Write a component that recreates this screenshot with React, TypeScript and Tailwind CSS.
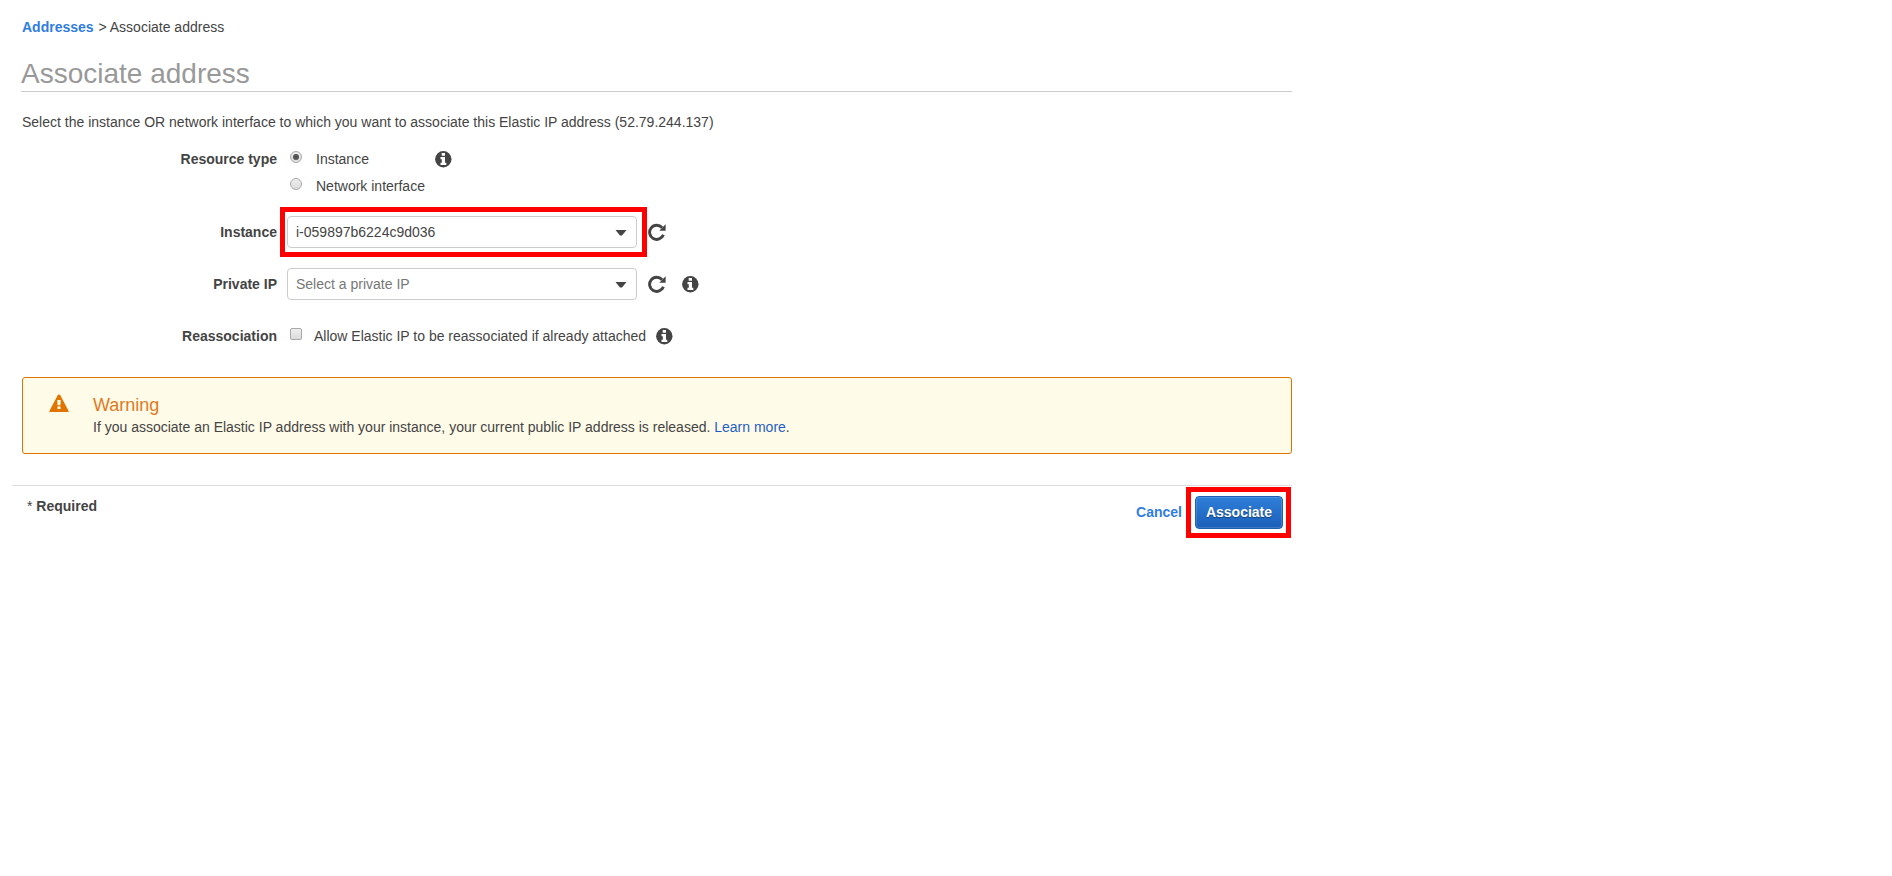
import React from "react";

function InfoIcon({ className = "" }: { className?: string }) {
  return (
    <svg viewBox="0 0 17 17" className={`size-[17px] shrink-0 ${className}`} aria-hidden="true">
      <circle cx="8.3" cy="8.2" r="8.2" fill="#444" />
      <path d="M6.700 2h3.300v2.700H6.700zM5.500 6H10v5.700h1.300v2.200H5.500v-2.200h1.300V8.200H5.500z" fill="#fff" />
    </svg>
  );
}

function RefreshIcon({ className = "" }: { className?: string }) {
  return (
    <svg viewBox="0 0 18 18" className={`size-[18px] shrink-0 ${className}`} aria-hidden="true">
      <path d="M14.1 4.700A7.100 7.100 0 1 0 15.400 11.700" fill="none" stroke="#444" strokeWidth="2.900" />
      <path d="M17.600 1.300v6.500H11.300z" fill="#444" />
    </svg>
  );
}

function WarningIcon() {
  return (
    <svg viewBox="0 0 20 18" className="mt-4 h-[18px] w-5 shrink-0" aria-hidden="true">
      <path d="M10 .4c.5 0 .9.2 1.200.7l8.400 15.800c.4.700-.1 1.100-.8 1.100H1.200c-.7 0-1.200-.4-.8-1.100L8.800 1.100c.3-.5.700-.7 1.200-.7z" fill="#df7400" />
      <path d="M8.300 6h3.400l-.3 5.200H8.600zM8.500 12.400h3v2.700h-3z" fill="#fffbe9" />
    </svg>
  );
}

function Row({ label, className, children }: { label: string; className: string; children: React.ReactNode }) {
  return (
    <div className={`flex ${className}`}>
      <div className="w-[277px] shrink-0 text-right font-bold">{label}</div>
      {children}
    </div>
  );
}

function Radio({ checked = false }: { checked?: boolean }) {
  return (
    <span className="mt-0.5 flex size-3 shrink-0 items-center justify-center rounded-full border border-[#a8a8a8] bg-linear-to-b from-[#eee] to-[#dcdcdc]">
      {checked && <span className="size-1.5 rounded-full bg-[#555]" />}
    </span>
  );
}

function Select({ text, muted = false }: { text: string; muted?: boolean }) {
  return (
    <div className="flex h-8 w-[350px] shrink-0 items-center justify-between rounded-[4px] border border-[#ccc] bg-white pr-[9px] pl-2">
      <span className={muted ? "text-[#777]" : "text-[#444]"}>{text}</span>
      <svg viewBox="0 0 12 6" className="mt-px h-1.5 w-3" aria-hidden="true">
        <path d="M.5 0h11L7 5.500H5z" fill="#444" />
      </svg>
    </div>
  );
}

export default function App() {
  return (
    <main className="h-[876px] bg-white pt-[17px] font-['Liberation_Sans',Arial,sans-serif] text-[14px] leading-5 text-[#444]">
      <div className="w-[1292px]">
        <nav className="pl-[22px]">
          <a className="mr-px font-bold text-[#2f7de1]">Addresses</a> &gt; Associate address
        </nav>
        <h1 className="mt-5 ml-[21px] h-[35px] border-b border-[#ccc] text-[28px] leading-[34px] text-[#999]">
          Associate address
        </h1>
        <p className="mt-5 pl-[22px]">
          Select the instance OR network interface to which you want to associate this Elastic IP address (52.79.244.137)
        </p>

        <Row label="Resource type" className="mt-[17px] h-[58px]">
          <div className="ml-[13px] flex flex-col gap-[7px]">
            <div className="flex h-5">
              <Radio checked />
              <span className="ml-3.5 w-[119px]">Instance</span>
              <InfoIcon className="mt-0.5" />
            </div>
            <div className="flex h-5">
              <Radio />
              <span className="ml-3.5">Network interface</span>
            </div>
          </div>
        </Row>

        <Row label="Instance" className="h-[50px] items-center">
          <div className="ml-[3px] h-[50px] w-[367px] border-5 border-[#f00] pt-1 pl-0.5">
            <Select text="i-059897b6224c9d036" />
          </div>
          <RefreshIcon className="ml-px" />
        </Row>

        <Row label="Private IP" className="mt-[11px] h-8 items-center">
          <div className="ml-2.5 flex items-center">
            <Select text="Select a private IP" muted />
            <RefreshIcon className="ml-[11px]" />
            <InfoIcon className="ml-4" />
          </div>
        </Row>

        <Row label="Reassociation" className="mt-[26px] h-5">
          <span className="mt-0.5 ml-[13px] size-3 shrink-0 rounded-[2px] border border-[#a8a8a8] bg-linear-to-b from-[#eee] to-[#dcdcdc]" />
          <span className="ml-3">Allow Elastic IP to be reassociated if already attached</span>
          <InfoIcon className="mt-0.5 ml-2.5" />
        </Row>

        <section className="mt-[31px] ml-[22px] flex h-[77px] rounded-[3px] border border-[#df7400] bg-[#fffbe9] pl-[26px]">
          <WarningIcon />
          <div className="ml-6 pt-[15px]">
            <h2 className="text-[18px] leading-6 text-[#df7a1c]">Warning</h2>
            <p>
              If you associate an Elastic IP address with your instance, your current public IP address is released.{" "}
              <a className="text-[#1f5fc4]">Learn more</a>.
            </p>
          </div>
        </section>

        <footer className="mt-[31px] ml-3 flex justify-between border-t border-[#ddd]">
          <div className="pt-2.5 pl-[15px]">
            * <b>Required</b>
          </div>
          <div className="mt-px mr-px flex">
            <a className="pt-[15px] pr-1 font-bold text-[#2f7de1]">Cancel</a>
            <div className="h-[51px] w-[105px] border-5 border-[#f00] pt-1 pl-1">
              <button className="flex h-[33px] w-[88px] items-start justify-center rounded-[4px] border border-[#1c5fb5] bg-linear-to-b from-[#2f7fd9] to-[#1a5fb8] pt-[5px] text-[14px] font-bold text-white shadow-[inset_0_0_0_1px_rgba(255,255,255,0.15)] text-shadow-[0_1px_1px_rgba(0,0,0,0.4)]">
                Associate
              </button>
            </div>
          </div>
        </footer>
      </div>
    </main>
  );
}
